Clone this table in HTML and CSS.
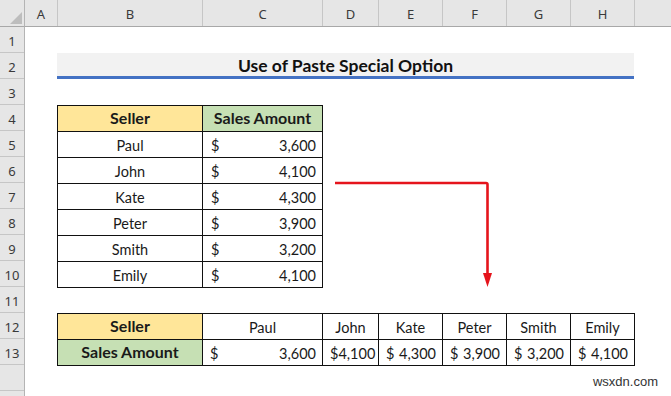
FILE: index.html
```html
<!DOCTYPE html>
<html lang="en">
<head>
    <meta charset="UTF-8">
    <title>Use of Paste Special Option</title>
    <link rel="stylesheet" href="styles.css">
</head>
<body>
    <div class="sheet">
        <div class="corner">
            <svg width="25" height="27" viewBox="0 0 25 27"><polygon points="22,12 22,24 10,24" fill="#bdbdbd"/></svg>
        </div>

        <div class="col-heads">
            <div class="col-head w-a">A</div>
            <div class="col-head w-b">B</div>
            <div class="col-head w-c">C</div>
            <div class="col-head w-d">D</div>
            <div class="col-head w-e">E</div>
            <div class="col-head w-e">F</div>
            <div class="col-head w-e">G</div>
            <div class="col-head w-e">H</div>
            <div class="col-head rest"></div>
        </div>

        <div class="row-heads">
            <div class="row-head">1</div>
            <div class="row-head">2</div>
            <div class="row-head">3</div>
            <div class="row-head">4</div>
            <div class="row-head">5</div>
            <div class="row-head">6</div>
            <div class="row-head">7</div>
            <div class="row-head">8</div>
            <div class="row-head">9</div>
            <div class="row-head">10</div>
            <div class="row-head">11</div>
            <div class="row-head">12</div>
            <div class="row-head">13</div>
            <div class="row-head"></div>
        </div>

        <div class="cells">
            <div class="title">Use of Paste Special Option</div>

            <table class="data vertical">
                <colgroup><col class="c-b"><col></colgroup>
                <tr>
                    <th class="yellow">Seller</th>
                    <th class="green">Sales Amount</th>
                </tr>
                <tr><td>Paul</td><td><div class="acct"><span>$</span><span>3,600</span></div></td></tr>
                <tr><td>John</td><td><div class="acct"><span>$</span><span>4,100</span></div></td></tr>
                <tr><td>Kate</td><td><div class="acct"><span>$</span><span>4,300</span></div></td></tr>
                <tr><td>Peter</td><td><div class="acct"><span>$</span><span>3,900</span></div></td></tr>
                <tr><td>Smith</td><td><div class="acct"><span>$</span><span>3,200</span></div></td></tr>
                <tr><td>Emily</td><td><div class="acct"><span>$</span><span>4,100</span></div></td></tr>
            </table>

            <svg class="arrow" width="170" height="120" viewBox="0 0 170 120">
                <path d="M2 6 H153 Q154.5 6 154.5 7.5 V97" fill="none" stroke="#e5141c" stroke-width="2.6"/>
                <polygon points="150,96 159,96 154.5,110" fill="#e5141c"/>
            </svg>

            <table class="data horizontal">
                <colgroup>
                    <col class="c-b"><col class="c-c"><col class="c-d">
                    <col class="c-e"><col class="c-e"><col class="c-e"><col class="c-e">
                </colgroup>
                <tr>
                    <th class="yellow">Seller</th>
                    <td>Paul</td>
                    <td>John</td>
                    <td>Kate</td>
                    <td>Peter</td>
                    <td>Smith</td>
                    <td>Emily</td>
                </tr>
                <tr>
                    <th class="green">Sales Amount</th>
                    <td><div class="acct"><span>$</span><span>3,600</span></div></td>
                    <td><div class="acct"><span>$</span><span>4,100</span></div></td>
                    <td><div class="acct"><span>$</span><span>4,300</span></div></td>
                    <td><div class="acct"><span>$</span><span>3,900</span></div></td>
                    <td><div class="acct"><span>$</span><span>3,200</span></div></td>
                    <td><div class="acct"><span>$</span><span>4,100</span></div></td>
                </tr>
            </table>

            <div class="watermark">wsxdn.com</div>
        </div>
    </div>
</body>
</html>
```

FILE: styles.css
```css
* {
    margin: 0;
    padding: 0;
    box-sizing: border-box;
}

body {
    background: white;
    font-family: 'Lato', sans-serif;
    color: #1a1a1a;
    overflow: hidden;
}

.sheet {
    width: 671px;
    height: 396px;
    display: grid;
    grid-template-columns: 25px 1fr;
    grid-template-rows: 27px 1fr;
    overflow: hidden;
}

/* headers */
.corner {
    background: #e6e6e6;
    border-right: 1px solid #b4b4b4;
    border-bottom: 1px solid #a8a8a8;
}

.corner svg {
    display: block;
}

.col-heads {
    display: flex;
    background: #e6e6e6;
    border-bottom: 1px solid #a8a8a8;
}

.col-head {
    flex: none;
    display: flex;
    align-items: center;
    justify-content: center;
    border-right: 1px solid #c6c6c6;
    font-family: 'Noto Sans', sans-serif;
    font-size: 13px;
    color: #3a3a3a;
    padding-top: 2px;
}

.w-a { width: 33px; }
.w-b { width: 145px; }
.w-c { width: 120px; }
.w-d { width: 56px; }
.w-e { width: 64px; }

.col-head.rest {
    flex: 1;
    border-right: none;
}

.row-heads {
    display: flex;
    flex-direction: column;
    background: #e6e6e6;
    border-right: 1px solid #b4b4b4;
}

.row-head {
    flex: none;
    height: 26px;
    display: flex;
    align-items: center;
    justify-content: center;
    border-bottom: 1px solid #c6c6c6;
    font-family: 'Noto Sans', sans-serif;
    font-size: 13px;
    color: #3a3a3a;
    padding-top: 2px;
}

/* worksheet area */
.cells {
    position: relative;
    display: grid;
    grid-template-columns: 32px 145px 120px 56px 64px 64px 64px 64px 1fr;
    grid-template-rows: repeat(14, 26px);
}

.title {
    grid-column: 2 / 9;
    grid-row: 2;
    background: #f2f2f2;
    border-bottom: 3px solid #4472c4;
    display: flex;
    align-items: center;
    justify-content: center;
    font-weight: 700;
    font-size: 17.5px;
    color: #111;
    padding-top: 2px;
}

.data {
    border-collapse: collapse;
    table-layout: fixed;
    width: calc(100% + 1px);
    font-size: 14.5px;
}

.data th,
.data td {
    border: 1px solid #111;
    height: 26px;
    text-align: center;
    white-space: nowrap;
    padding: 1px 0 0;
}

.data th {
    font-size: 16px;
    font-weight: 700;
    padding: 0 0 2px;
}

.vertical {
    grid-column: 2 / 4;
    grid-row: 4 / 11;
}

.horizontal {
    grid-column: 2 / 9;
    grid-row: 12 / 14;
}

.c-b { width: 145px; }
.c-c { width: 120px; }
.c-d { width: 56px; }
.c-e { width: 64px; }

.yellow {
    background: #ffe699;
}

.green {
    background: #c6e0b4;
}

.acct {
    display: flex;
    justify-content: space-between;
    padding: 0 6px 0 8px;
}

.horizontal .acct {
    padding: 0 6px 0 7px;
}

.arrow {
    position: absolute;
    left: 308px;
    top: 150px;
}

.watermark {
    grid-column: 6 / 10;
    grid-row: 14;
    justify-self: end;
    align-self: end;
    margin: 0 13px 2px 0;
    font-family: 'Liberation Sans', sans-serif;
    font-size: 13px;
    color: #333;
}
```
